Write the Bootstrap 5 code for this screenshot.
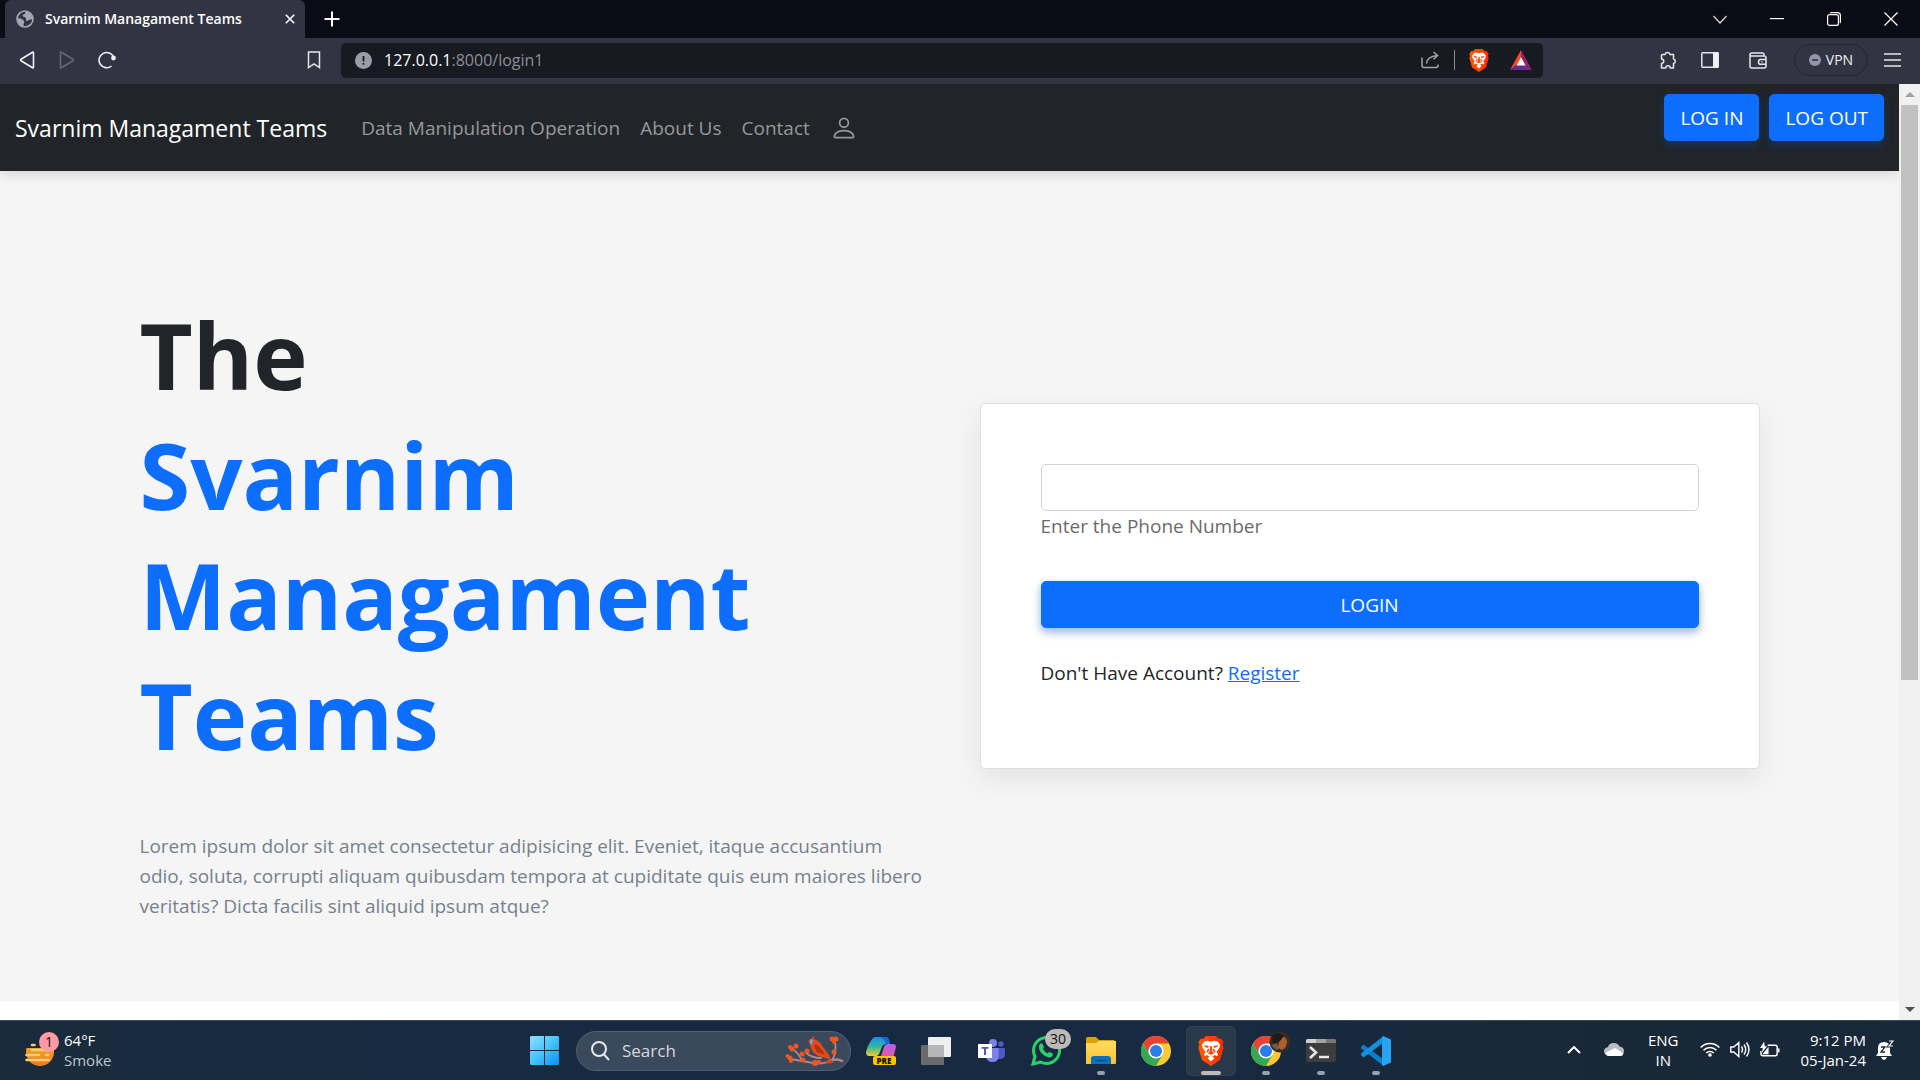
<!DOCTYPE html>
<html lang="en">
<head>
<meta charset="utf-8">
<meta name="viewport" content="width=device-width, initial-scale=1">
<title>Svarnim Managament Teams</title>
<link href="https://cdn.jsdelivr.net/npm/bootstrap@5.3.0/dist/css/bootstrap.min.css" rel="stylesheet">
<style>
  html { font-size: 20px; }
  body { font-family: "Open Sans", "Noto Sans", sans-serif; font-size: 19px; line-height: 30px; height: 100vh; overflow: hidden; }
  svg { display: block; flex: none; }
  .bare { background: none; border: 0; padding: 0; color: inherit; display: flex; align-items: center; justify-content: center; }
  .spacer { flex: 1 1 auto; }

  /* browser frame */
  .tabstrip { height: 38px; background: #0b0b15; color: #fff; padding: 0 1px 0 5px; }
  .tab { width: 300px; height: 38px; background: #323443; border-radius: 6px 6px 0 0; padding: 0 10px 0 11px; gap: 11px; font-size: 14px; line-height: 20px; font-weight: 600; }
  .winctl .bare { width: 57px; height: 38px; }
  .newtab { width: 54px; height: 38px; }
  .toolbar { height: 46px; background: #323443; color: #f0f0f4; padding: 0 16px 2px 15px; }
  .toolbar .bare { width: 24px; height: 30px; }
  .navset { width: 326px; gap: 16px; padding-right: 15px; }
  .urlbar { height: 35px; background: #171a21; border-radius: 5px; padding: 0 10px 0 14px; color: #8d8f94; flex: 0 1 1202px; }
  .urlbar .host { color: #fff; }
  .urltext { font-size: 16px; line-height: 24px; margin-left: 12px; }
  .urlsep { width: 1px; height: 20px; background: #8a8b90; margin: 0 12px; }
  .urlbar .rewards { margin-left: 18px; }
  .actions { gap: 24px; }
  .toolbar .vpn { width: 74px; height: 32px; border: 1px solid #21232c; border-radius: 16px; font-size: 14px; line-height: 20px; gap: 5px; }
  .puzzle { margin-right: -6px; }
  .menu { margin-left: -12px; }

  /* web page viewport */
  .viewport { flex: 1 1 0; min-height: 0; }
  .site { flex: 1 1 0; min-width: 0; overflow: hidden; background: #fff; }
  .site-nav { padding: 10px 0; z-index: 1; box-shadow: 0 4px 12px rgba(0,0,0,.12); background: #212529; }
  .site-nav .container-fluid { padding: 0 15px; }
  .site-nav .navbar-brand { font-size: 23px; line-height: 36px; margin-right: 24px; }
  .site-nav .nav-link { padding: 10px; color: #969899; line-height: 30px; }
  .hero { background: #f5f5f5; padding: 60px 0; }
  .hero .container { max-width: 1650px; padding: 0 15px; }
  .hero .row { --bs-gutter-x: 60px; }
  .headline { font-size: 92px; line-height: 120px; font-weight: 700; margin: 64px 0 56px; color: #212529; }
  .headline span { color: #0d6efd; }
  .intro { color: #75818d; margin: 0 -10px 20px 0; }
  .btn-raised { --bs-btn-font-size: 19px; --bs-btn-border-radius: 5px; line-height: 30px; box-shadow: 0 4px 10px rgba(13,110,253,.3), 0 4px 8px rgba(0,0,0,.16); }
  .login-card { border-color: #dfdfdf; border-radius: 5px; box-shadow: 0 10px 30px rgba(0,0,0,.08); }
  .login-card .card-body { padding: 60px; }
  .login-card .form-control { height: 47px; border-color: #ced4da; border-radius: 5px; }
  .login-card .form-label { color: #6b6b6b; margin-bottom: 10px; }
  .login-card a { color: #0d6efd; }
  .scrollrail { width: 21px; background: #f1f1f1; padding: 0 2px; }
  .scrollrail .bare { height: 21px; width: 17px; }
  .thumb { height: 575px; background: #c1c1c1; }

  /* taskbar */
  .taskbar { height: 60px; display: grid; grid-template-columns: 1fr auto 1fr; background: linear-gradient(90deg,#192b3c,#172a41 30%,#182a42 60%,#182837 85%,#19283a); border-top: 1px solid #3c4a59; color: #fff; font-size: 15px; line-height: 20px; }
  .weather { padding: 0 0 2px 24px; gap: 4px; }
  .weather .sub { color: #c0c7ce; }
  .apps { gap: 5px; }
  .tile { width: 50px; height: 50px; border-radius: 6px; position: relative; }
  .tile.running::after { content: ""; position: absolute; bottom: 1px; left: 21px; width: 8px; height: 4px; border-radius: 2px; background: #97a1ad; }
  .tile.current { background: #29394a; box-shadow: inset 0 0 0 1px #324152; }
  .tile.current::after { left: 15px; width: 20px; background: #c0bbba; }
  .count { position: absolute; left: 24px; top: 3px; width: 26px; height: 20px; border-radius: 10px; background: #bdb9b8; color: #111; font-size: 14px; line-height: 20px; text-align: center; }
  .finder { width: 275px; height: 40px; border-radius: 20px; background: #3a495b; border: 1px solid #536172; margin: 0 0 0 2px; padding: 0 5px 0 14px; gap: 12px; }
  .finder input { background: none; border: 0; outline: 0; color: #fff; font-size: 17px; line-height: 24px; padding: 0; width: 100px; min-width: 0; flex: 1 1 auto; }
  .finder input::placeholder { color: #d5d9de; opacity: 1; }
  .tray { padding: 0 26px 2px 0; }
  .tray .clock { margin: 0 10px 0 20px; text-align: right; }
  .tray .lang { margin: 0 22px 0 24px; text-align: center; }
  .tray .cloud { margin-left: 23px; }
  .status { gap: 10px; }
</style>
<script src="https://cdn.jsdelivr.net/npm/bootstrap@5.3.0/dist/js/bootstrap.bundle.min.js"></script>
</head>
<body class="d-flex flex-column">

<svg width="0" height="0" class="position-absolute" aria-hidden="true">
  <defs>
    <linearGradient id="braveFill" x1="0" y1="0" x2="1" y2="0"><stop offset="0" stop-color="#ff5a00"/><stop offset="1" stop-color="#ff2a00"/></linearGradient>
    <linearGradient id="winFill" x1="0" y1="0" x2="1" y2="1"><stop offset="0" stop-color="#8fe0ff"/><stop offset=".5" stop-color="#45c4fb"/><stop offset="1" stop-color="#0a8ff5"/></linearGradient>
    <linearGradient id="cpA" x1="0" y1="0" x2="0" y2="1"><stop offset="0" stop-color="#1c8df0"/><stop offset=".5" stop-color="#2fb6a0"/><stop offset="1" stop-color="#f3cf2a"/></linearGradient>
    <linearGradient id="cpB" x1="0" y1="0" x2="0" y2="1"><stop offset="0" stop-color="#b060f0"/><stop offset="1" stop-color="#f0568a"/></linearGradient>
    <linearGradient id="folderFill" x1="0" y1="0" x2="0" y2="1"><stop offset="0" stop-color="#ffdc62"/><stop offset="1" stop-color="#fbc02f"/></linearGradient>
    <linearGradient id="sunFill" x1="0" y1="0" x2="0" y2="1"><stop offset="0" stop-color="#f6b52c"/><stop offset="1" stop-color="#ee7a1c"/></linearGradient>
    <symbol id="lion" viewBox="0 0 26 30">
      <path fill="url(#braveFill)" d="M8 0h10l3 3 2-.4 2.600 3.600-1 2.600 1 3-3.600 12.200L13 30 4 24 .4 11.800l1-3-1-2.600L3 2.600 5 3z"/>
      <path fill="#fff" d="M13 5.500l3.500-.8 3.200.8 2.300 3.300-.5 3-3 4.200 1.500 2-.8 2.200-2.400-1.200-2.300 1.800 2 1.500L13 25.500l-3.500-3.200 2-1.500L9.200 19l-2.400 1.200L6 18l1.500-2-3-4.200-.5-3 2.300-3.300 3.200-.8z"/>
      <path fill="#fc4a0a" d="M6 9.200l4.500.7-.4 2-3.200-.9zM20 9.200l-4.500.7.4 2 3.200-.9zM12.200 10h1.600l.6 5.500 2 1.800-3.400 1.400-3.400-1.400 2-1.800zM10 12.500l1.200.4-.6 2.500-1.500 1.400-.6-1.200zM16 12.500l-1.200.4.6 2.500 1.500 1.400.6-1.200z"/>
    </symbol>
    <symbol id="chromeMark" viewBox="0 0 30 30">
      <circle cx="15" cy="15" r="15" fill="#fcc934"/>
      <path fill="#ea4335" d="M2 7.500A15 15 0 0 1 28 7.500H15L8.500 18.700z"/>
      <path fill="#34a853" d="M2 7.500A15 15 0 0 0 15 30l6.500-11.300H8.500z"/>
      <circle cx="15" cy="15" r="7.600" fill="#fff"/><circle cx="15" cy="15" r="6" fill="#2b7de9"/>
    </symbol>
  </defs>
</svg>

<header>
  <div class="tabstrip d-flex align-items-center">
    <div class="tab d-flex align-items-center">
      <svg width="18" height="18" viewBox="0 0 18 18"><circle cx="9" cy="9" r="8" fill="#323443" stroke="#a5a7b0" stroke-width="1.600"/><path fill="#a5a7b0" d="M9 1.500c1 1.500 0 2.500-1.500 3s-1 2 .5 2.500c2 .3 2.500 1 2 2.500s1 1.500 2 1 2-1.500 4.500-1.200C16.500 5 13 1.500 9 1.500zM1.500 8.500c2-.5 4 .3 5.500 1.500s1.500 2 .8 3.500-.3 2.500.7 3C4.500 16.500 1.500 13 1.500 8.500z"/></svg>
      <span>Svarnim Managament Teams</span>
      <span class="spacer"></span>
      <button class="bare" type="button" aria-label="Close tab"><svg width="10" height="10" viewBox="0 0 10 10" stroke="#fff" stroke-width="1.600"><path d="M.8.800l8.400 8.400M9.200.8L.8 9.200"/></svg></button>
    </div>
    <button class="bare newtab" type="button" aria-label="New tab"><svg width="16" height="16" viewBox="0 0 16 16" stroke="#fff" stroke-width="2"><path d="M8 .5v15M.5 8h15"/></svg></button>
    <span class="spacer"></span>
    <div class="winctl d-flex">
      <button class="bare" type="button" aria-label="Search tabs"><svg width="14" height="9" viewBox="0 0 14 9" fill="none" stroke="#ddd" stroke-width="1.200"><path d="M.5 1L7 8l6.500-7"/></svg></button>
      <button class="bare" type="button" aria-label="Minimize"><svg width="14" height="2" viewBox="0 0 14 2"><path fill="#fff" d="M0 0h14v1.200H0z"/></svg></button>
      <button class="bare" type="button" aria-label="Restore"><svg width="14" height="14" viewBox="0 0 14 14" fill="none" stroke="#fff" stroke-width="1.200"><rect x=".6" y="2.600" width="10.800" height="10.800" rx="2"/><path d="M3 1q.5-.4 1.500-.4h6q2.900 0 2.900 2.900v6q0 1-.5 1.500"/></svg></button>
      <button class="bare" type="button" aria-label="Close"><svg width="14" height="14" viewBox="0 0 14 14" stroke="#fff" stroke-width="1.200"><path d="M.5.500l13 13M13.500.500l-13 13"/></svg></button>
    </div>
  </div>

  <div class="toolbar d-flex align-items-center">
    <div class="navset d-flex align-items-center">
      <button class="bare" type="button" aria-label="Back"><svg width="16" height="18" viewBox="0 0 16 18" fill="none" stroke="#f0f0f4" stroke-width="1.600" stroke-linejoin="round"><path d="M13.600 1.200q.9-.3.900.7v14.200q0 1-.9.700L2 9.700Q1.300 9 2 8.300z"/></svg></button>
      <button class="bare" type="button" aria-label="Forward"><svg width="16" height="18" viewBox="0 0 16 18" fill="none" stroke="#656775" stroke-width="1.600" stroke-linejoin="round"><path d="M2.400 1.200q-.9-.3-.9.700v14.200q0 1 .9.700L14 9.700q.7-.7 0-1.400z"/></svg></button>
      <button class="bare" type="button" aria-label="Reload"><svg width="18" height="18" viewBox="0 0 18 18" fill="none" stroke="#f0f0f4" stroke-width="1.600"><path d="M13.500 15A7.600 7.600 0 1 1 15.800 6.500"/><circle cx="15.500" cy="7" r="1.600" fill="#f0f0f4"/></svg></button>
      <span class="spacer"></span>
      <button class="bare" type="button" aria-label="Bookmark"><svg width="14" height="18" viewBox="0 0 14 18" fill="none" stroke="#e6e6ea" stroke-width="1.500"><path d="M1.500 1h11v15.500L7 12.800l-5.500 3.700z"/></svg></button>
    </div>
    <div class="urlbar d-flex align-items-center">
      <svg width="17" height="17" viewBox="0 0 17 17"><circle cx="8.500" cy="8.500" r="8.500" fill="#9b9da6"/><path fill="#171a21" d="M7.600 4h1.800v5.500H7.600zM7.600 11h1.800v1.800H7.600z"/></svg>
      <div class="urltext"><span class="host">127.0.0.1</span>:8000/login1</div>
      <span class="spacer"></span>
      <button class="bare" type="button" aria-label="Share"><svg width="18" height="18" viewBox="0 0 18 18" fill="none" stroke="#a3a4a8" stroke-width="1.500"><path d="M1 6.500v8q0 2 2 2h12q2 0 2-2v-1M5.500 12.500q.5-7 11-8M12.500 1l4 3.500-4 3.800"/></svg></button>
      <span class="urlsep"></span>
      <button class="bare" type="button" aria-label="Brave Shields"><svg width="20" height="23"><use href="#lion"/></svg></button>
      <button class="bare rewards" type="button" aria-label="Brave Rewards"><svg width="22" height="20" viewBox="0 0 22 20"><path fill="#ff4724" d="M11 0v7l-4.500 8L0 20z"/><path fill="#9e1f63" d="M11 0v7l4.500 8L22 20z"/><path fill="#662d91" d="M0 20h22l-6.500-5h-9z"/><path fill="#fff" d="M11 7l4.600 8.500H6.400z"/></svg></button>
    </div>
    <span class="spacer"></span>
    <div class="actions d-flex align-items-center">
      <button class="bare puzzle" type="button" aria-label="Extensions"><svg width="18" height="18" viewBox="0 0 18 18" fill="none" stroke="#e6e6ea" stroke-width="1.500" stroke-linejoin="round"><path d="M3.500 3.500H6a2.600 2.600 0 0 1 5 0h3.500V8a2.300 2.300 0 0 1 0 4.500V17h-3.300a2.200 2.200 0 0 0-4.400 0H2.500v-4.500a2.200 2.200 0 0 0 0-4.500V4.500q0-1 1-1z"/></svg></button>
      <button class="bare" type="button" aria-label="Sidebar"><svg width="18" height="16" viewBox="0 0 18 16"><rect x=".8" y=".8" width="16.400" height="14.400" rx="1" fill="none" stroke="#e6e6ea" stroke-width="1.500"/><path fill="#f0f0f4" d="M12 0h5.500v16H12z"/></svg></button>
      <button class="bare" type="button" aria-label="Wallet"><svg width="18" height="17" viewBox="0 0 18 17" fill="none" stroke="#e6e6ea" stroke-width="1.500"><path d="M15 4V2.500Q15 1 13.500 1H3Q1 1 1 2.700V14q0 2 2 2h12q2 0 2-2V6q0-2-2-2H3Q1 4 1 2.700M17 7.500h-5.500q-2 0-2 2.400t2 2.400H17M12.500 9.900h1"/></svg></button>
      <button class="bare vpn" type="button"><svg width="12" height="12" viewBox="0 0 12 12"><circle cx="6" cy="6" r="6" fill="#9395ab"/><path fill="#323443" d="M3 5.200h6v1.600H3z"/></svg>VPN</button>
      <button class="bare menu" type="button" aria-label="Menu"><svg width="17" height="14" viewBox="0 0 17 14" stroke="#e6e6ea" stroke-width="1.600"><path d="M0 1h17M0 7h17M0 13h17"/></svg></button>
    </div>
  </div>
</header>

<div class="viewport d-flex">
  <div class="site">
    <nav class="navbar navbar-expand-lg navbar-dark site-nav">
      <div class="container-fluid">
        <a class="navbar-brand" href="#">Svarnim Managament Teams</a>
        <ul class="navbar-nav me-auto align-items-center">
          <li class="nav-item"><a class="nav-link" href="#">Data Manipulation Operation</a></li>
          <li class="nav-item"><a class="nav-link" href="#">About Us</a></li>
          <li class="nav-item"><a class="nav-link" href="#">Contact</a></li>
          <li class="nav-item"><a class="nav-link" href="#" aria-label="Profile"><svg width="28" height="28" viewBox="0 0 16 16" fill="currentColor"><path d="M8 8a3 3 0 1 0 0-6 3 3 0 0 0 0 6zm2-3a2 2 0 1 1-4 0 2 2 0 0 1 4 0zm4 8c0 1-1 1-1 1H3s-1 0-1-1 1-4 6-4 6 3 6 4zm-1-.004c-.001-.246-.154-.986-.832-1.664C11.516 10.680 10.289 10 8 10c-2.290 0-3.516.68-4.168 1.332-.678.678-.83 1.418-.832 1.664h10z"/></svg></a></li>
        </ul>
        <div class="d-flex gap-2 mb-3">
          <button class="btn btn-primary btn-raised" type="button">LOG IN</button>
          <button class="btn btn-primary btn-raised" type="button">LOG OUT</button>
        </div>
      </div>
    </nav>

    <section class="hero">
      <div class="container">
        <div class="row align-items-center">
          <div class="col-lg-6">
            <h1 class="headline">The<br><span>Svarnim<br>Managament<br>Teams</span></h1>
            <p class="intro">Lorem ipsum dolor sit amet consectetur adipisicing elit. Eveniet, itaque accusantium odio, soluta, corrupti aliquam quibusdam tempora at cupiditate quis eum maiores libero veritatis? Dicta facilis sint aliquid ipsum atque?</p>
          </div>
          <div class="col-lg-6">
            <div class="card login-card">
              <form class="card-body">
                <div class="mb-4">
                  <input class="form-control" type="text" id="phone">
                  <label class="form-label d-inline-block" for="phone">Enter the Phone Number</label>
                </div>
                <button class="btn btn-primary btn-raised w-100 d-block mb-4" type="button">LOGIN</button>
                <p class="mb-3">Don't Have Account? <a href="#">Register</a></p>
              </form>
            </div>
          </div>
        </div>
      </div>
    </section>
  </div>
  <div class="scrollrail d-flex flex-column">
    <button class="bare" type="button" aria-label="Scroll up"><svg width="10" height="5" viewBox="0 0 10 5"><path fill="#a3a3a3" d="M5 0l5 5H0z"/></svg></button>
    <div class="thumb"></div>
    <span class="spacer"></span>
    <button class="bare" type="button" aria-label="Scroll down"><svg width="10" height="5" viewBox="0 0 10 5"><path fill="#505050" d="M0 0h10L5 5z"/></svg></button>
  </div>
</div>

<footer class="taskbar">
  <div class="weather d-flex align-items-center">
    <svg width="36" height="38" viewBox="0 0 36 38">
      <circle cx="16" cy="21" r="14" fill="url(#sunFill)"/>
      <path fill="#182a3b" d="M0 0h34v17H0z"/>
      <g stroke="#f0cf78" stroke-width="2.600" stroke-linecap="round"><path d="M8 14h2.500M8 19h20M2.500 24H15M22 24h2M2.500 29h22"/></g>
      <circle cx="25" cy="11" r="10" fill="#ff9aa5"/><text x="25" y="16" text-anchor="middle" font-size="14" fill="#111">1</text>
    </svg>
    <div><div>64°F</div><div class="sub">Smoke</div></div>
  </div>

  <div class="apps d-flex align-items-center">
    <button class="bare tile" type="button" aria-label="Start"><svg width="29" height="29" viewBox="0 0 29 29"><path fill="url(#winFill)" d="M1 0h13v14H0V1zM15 0h13l1 1v13H15zM0 15h14v14H1l-1-1zM15 15h14v13l-1 1H15z"/></svg></button>
    <label class="finder d-flex align-items-center">
      <svg width="19" height="20" viewBox="0 0 19 20" fill="none" stroke="#e6e9ec" stroke-width="2"><circle cx="8" cy="8" r="7"/><path d="M13 13.500l5 5.500"/></svg>
      <input type="text" placeholder="Search" aria-label="Search">
      <svg width="60" height="32" viewBox="0 0 60 32">
        <g fill="none" stroke="#b3878a" stroke-linecap="round"><path stroke-width="2.500" d="M57 26q-5-3-12 0"/><path stroke-width="1.800" d="M46 25q-8 5-18 3T5 24M36 23q-9 0-15-5M17 26q-3-8-10-12M47 25q5-7 3-18"/></g>
        <path fill="#e34a1b" d="M23 7q1-3 3-3l3-3v3q6 2 9 8l6 8 2 5-5-2q-9-1-13-6-3-4-3-9z"/><path fill="#b32d14" d="M30 9q6 3 10 11l-8-3q-3-4-2-8z"/><path fill="#8b9dc4" d="M25 4l3 1-1 4-2 1z"/>
        <path fill="#d8431c" d="M41 26l6-1 1 3-7 1z"/>
        <g fill="#f0561f"><circle cx="5" cy="23" r="2.500"/><circle cx="2.500" cy="21" r="2"/><circle cx="6" cy="26" r="2"/><circle cx="7" cy="14" r="2.500"/><circle cx="11" cy="11" r="2.500"/><circle cx="5" cy="12" r="2"/><circle cx="17" cy="19" r="2.500"/><circle cx="18" cy="25" r="2.500"/><circle cx="22" cy="16" r="2.500"/><circle cx="30" cy="28" r="3"/><circle cx="34" cy="27" r="2"/><circle cx="47" cy="4" r="2.500"/><circle cx="51" cy="4" r="2.500"/><circle cx="49" cy="7" r="2"/><circle cx="49" cy="17" r="2.500"/></g>
      </svg>
    </label>
    <button class="bare tile" type="button" aria-label="Copilot"><svg width="30" height="30" viewBox="0 0 30 30"><path fill="url(#cpA)" d="M7 2q1-1 3-1h10q2 0 3 3l1 4h-4q-3 0-4 3l-3 7q-1 2-3 2H3q-3 0-3-4 2-8 7-14z"/><path fill="#1b63d8" d="M12 1h8q2 0 3 3l1 4h-4q-2-7-8-7z"/><path fill="url(#cpB)" d="M18 11q1-3 4-3h5q3 0 3 3l-2 8q-1 4-4 4H14z"/><rect x="7" y="20" width="23" height="9" rx="2" fill="#fcc500"/><text x="18" y="28" text-anchor="middle" font-size="8" font-weight="800" fill="#111">PRE</text></svg></button>
    <button class="bare tile" type="button" aria-label="Task view"><svg width="30" height="28" viewBox="0 0 30 28"><rect x="0" y="8" width="23" height="20" rx="1" fill="#6b6b6b"/><rect x="7" y="0" width="23" height="20" rx="1" fill="#efefef"/><path fill="#b5b6b8" d="M7 8h16v12H7z"/></svg></button>
    <button class="bare tile" type="button" aria-label="Teams"><svg width="27" height="24" viewBox="0 0 27 24"><circle cx="15" cy="4" r="4" fill="#7b83eb"/><circle cx="23" cy="5" r="2.700" fill="#5059c9"/><path fill="#5059c9" d="M18 9h8q1 0 1 1v5q0 5-5 5h-4z"/><path fill="#7b83eb" d="M8 9h12.500v8q0 6-6 6T8 17z"/><rect x="0" y="5" width="14" height="14" fill="#fff"/><path fill="#5059c9" d="M3.500 8h7v1.800H8V16H6V9.800H3.500z"/></svg></button>
    <button class="bare tile" type="button" aria-label="WhatsApp"><svg width="30" height="30" viewBox="0 0 30 30"><path fill="none" stroke="#25d366" stroke-width="3" d="M2 28l2-7.500A13 13 0 1 1 9.500 26z"/><path fill="#25d366" d="M9 8q1.500-1.500 2.500 0l1.300 2.600q.3 1-.9 2.200 1.700 3.200 4.800 4.700 1.300-1.700 2.200-1.300l2.700 1.400q1 .8-.4 2.600Q18 23 13 19.300T8 12q-.4-2.500 1-4z"/></svg><span class="count">30</span></button>
    <button class="bare tile running" type="button" aria-label="File Explorer"><svg width="30" height="27" viewBox="0 0 30 27"><path fill="#e0a000" d="M0 2q0-2 2-2h8l3 3h15l2 3v8H0z"/><path fill="url(#folderFill)" d="M0 6h10l3-2h17v22q0 1-1 1H0z"/><path fill="#0c6fc0" d="M5 27v-5q0-3 3-3h14q3 0 3 3v5z"/><path stroke="#074a87" stroke-width="1.400" d="M9 23.500h12"/></svg></button>
    <button class="bare tile" type="button" aria-label="Chrome"><svg width="30" height="30"><use href="#chromeMark"/></svg></button>
    <button class="bare tile running current" type="button" aria-label="Brave"><svg width="26" height="30"><use href="#lion"/></svg></button>
    <button class="bare tile running" type="button" aria-label="Chrome profile"><svg width="30" height="30"><use href="#chromeMark"/></svg>
      <svg class="position-absolute top-0 end-0 mt-1" width="22" height="22" viewBox="0 0 22 22"><circle cx="11" cy="11" r="10.500" fill="#3a2c22"/><path fill="#b0602f" d="M12 5q6 1 6 6t-5 8l-4-2 1-6z"/><path fill="#1f1b18" d="M3 5q6-6 12 0l-4 5-7 3z"/><path fill="#6f5a4c" d="M2 14l6-2 2 6-3 1z"/></svg></button>
    <button class="bare tile running" type="button" aria-label="Terminal"><svg width="30" height="23" viewBox="0 0 30 23"><rect width="30" height="23" rx="2" fill="#3d3d3f"/><path fill="#cfcfcf" d="M1 0h9v4H0V1z"/><path fill="#a3a3a3" d="M10 0h10v4H10z"/><path fill="#77777a" d="M20 0h9l1 1v3H20z"/><path fill="none" stroke="#e8e8e8" stroke-width="2.600" d="M4 8l6 5.500L4 19M13 18h10"/></svg></button>
    <button class="bare tile running" type="button" aria-label="Visual Studio Code"><svg width="30" height="30" viewBox="0 0 30 30"><path fill="#0a7fc8" d="M0 11l2.500-2.500L22 23v6.500L0 12.500z"/><path fill="#1590dc" d="M0 19l2.500 2.500L22 7V.5L0 17.500z"/><path fill="#27a4f2" d="M22 0l8 3.500v23L22 30l-1-1V1z"/></svg></button>
  </div>

  <div class="tray d-flex align-items-center justify-content-end">
    <svg width="14" height="8" viewBox="0 0 14 8" fill="none" stroke="#fff" stroke-width="2"><path d="M1 7l6-6 6 6"/></svg>
    <svg class="cloud" width="20" height="13" viewBox="0 0 20 13"><path fill="#b9bdc2" d="M4 4Q5 0 10 0q4 0 5.500 3.500Q20 4 20 8q0 2-1 3L4 12q-4 0-4-4 0-3 4-4z"/><path fill="#fff" d="M1 10l10-5 8 5q1 2-2 3H4q-2 0-3-3z"/></svg>
    <div class="lang">ENG<br>IN</div>
    <div class="status d-flex align-items-center">
      <svg width="20" height="15" viewBox="0 0 20 15" fill="none" stroke="#fff" stroke-width="1.500"><path d="M.6 5.500a13 13 0 0 1 18.800 0M3.500 8.300a9 9 0 0 1 13 0M6.300 11a5.200 5.200 0 0 1 7.400 0"/><circle cx="10" cy="13" r="1.800" fill="#fff" stroke="none"/></svg>
      <svg width="20" height="17" viewBox="0 0 20 17" fill="none" stroke="#fff" stroke-width="1.400"><path d="M.8 6v5h3l5 4.500v-14L3.800 6zM11.500 5.500q2 3 0 6M14 3.500q3.500 5 0 10M16.500 1.500q5 7 0 14"/></svg>
      <svg width="20" height="17" viewBox="0 0 21 17"><path fill="none" stroke="#fff" stroke-width="1.500" d="M8 4h8q2 0 2 2v7q0 2-2 2H3q-2 0-2-2v-3"/><path fill="#fff" d="M18.500 7.500h2v4h-2zM9 5.500v8H2.500zM4.500 0L0 7h3L2 12l5.500-7H4.800z"/></svg>
    </div>
    <div class="clock">9:12 PM<br>05-Jan-24</div>
    <svg width="18" height="20" viewBox="0 0 18 20"><path fill="#fff" d="M0 16l2-3V8q0-6 6-6t6 6v5l2 3zM5 17h6q-1 3-3 3t-3-3z"/><path fill="none" stroke="#182837" stroke-width="1.300" d="M5 7h4l-4 5h4"/><path fill="none" stroke="#182837" stroke-width="3" d="M12 1h5l-4 5h4"/><path fill="none" stroke="#fff" stroke-width="1.200" d="M13 1h4l-4 5h4"/></svg>
  </div>
</footer>
</body>
</html>
